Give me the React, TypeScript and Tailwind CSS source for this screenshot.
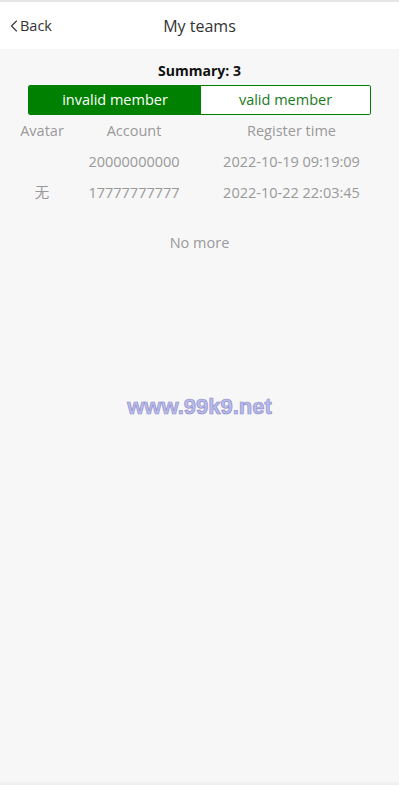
import { ChevronLeft } from "lucide-react";

const ROWS = [
  { avatar: "", account: "20000000000", time: "2022-10-19 09:19:09" },
  { avatar: "无", account: "17777777777", time: "2022-10-22 22:03:45" },
];

export default function App() {
  return (
    <div
      className="relative flex h-[785px] w-full flex-col bg-[#f7f7f7] text-[#999]"
      style={{ fontFamily: '"Open Sans", "Noto Sans", "Noto Sans CJK SC", sans-serif' }}
    >
      {/* header */}
      <header className="flex h-[49px] flex-none items-center border-t-2 border-[#e6e6e6] bg-white">
        <div className="flex w-[90px] items-center pl-[4px] text-[14.5px] text-[#333]">
          <ChevronLeft className="h-[20px] w-[20px]" strokeWidth={1.3} />
          <span className="-ml-[4px]">Back</span>
        </div>
        <h1 className="flex-1 text-center text-[16px] text-[#333]">My teams</h1>
        <div className="w-[90px]" />
      </header>

      <main className="flex flex-1 flex-col">
        <p className="mt-[12px] text-center text-[14px] font-bold leading-[20px] text-[#111]">
          Summary: 3
        </p>

        <div className="mx-[28px] mt-[4px] flex h-[30px] overflow-hidden rounded-[2px] border border-[#008000] text-[14.5px] leading-[26px]">
          <button type="button" className="w-[172px] bg-[#008000] text-white">
            invalid member
          </button>
          <button type="button" className="flex-1 bg-white text-[#1a7a1a]">
            valid member
          </button>
        </div>

        <div className="mt-[1px] text-[14.5px]">
          <div className="grid h-[30px] grid-cols-[84px_100px_1fr] items-center text-center">
            <span>Avatar</span>
            <span>Account</span>
            <span>Register time</span>
          </div>
          {ROWS.map((r) => (
            <div
              key={r.account}
              className="grid h-[31px] grid-cols-[84px_100px_1fr] items-center text-center"
            >
              <span>{r.avatar}</span>
              <span>{r.account}</span>
              <span>{r.time}</span>
            </div>
          ))}
        </div>

        <p className="mt-[25px] text-center text-[14.5px] leading-[20px]">No more</p>
      </main>

      <div className="h-[3px] flex-none bg-[#efefef]" />

      {/* watermark */}
      <div
        className="pointer-events-none absolute left-0 right-0 top-[390px] text-center text-[22px] font-bold text-[#babde9] [-webkit-text-stroke:0.7px_#8f8fcf]"
        style={{ fontFamily: '"Liberation Sans", Arial, sans-serif' }}
      >
        www.99k9.net
      </div>
    </div>
  );
}
